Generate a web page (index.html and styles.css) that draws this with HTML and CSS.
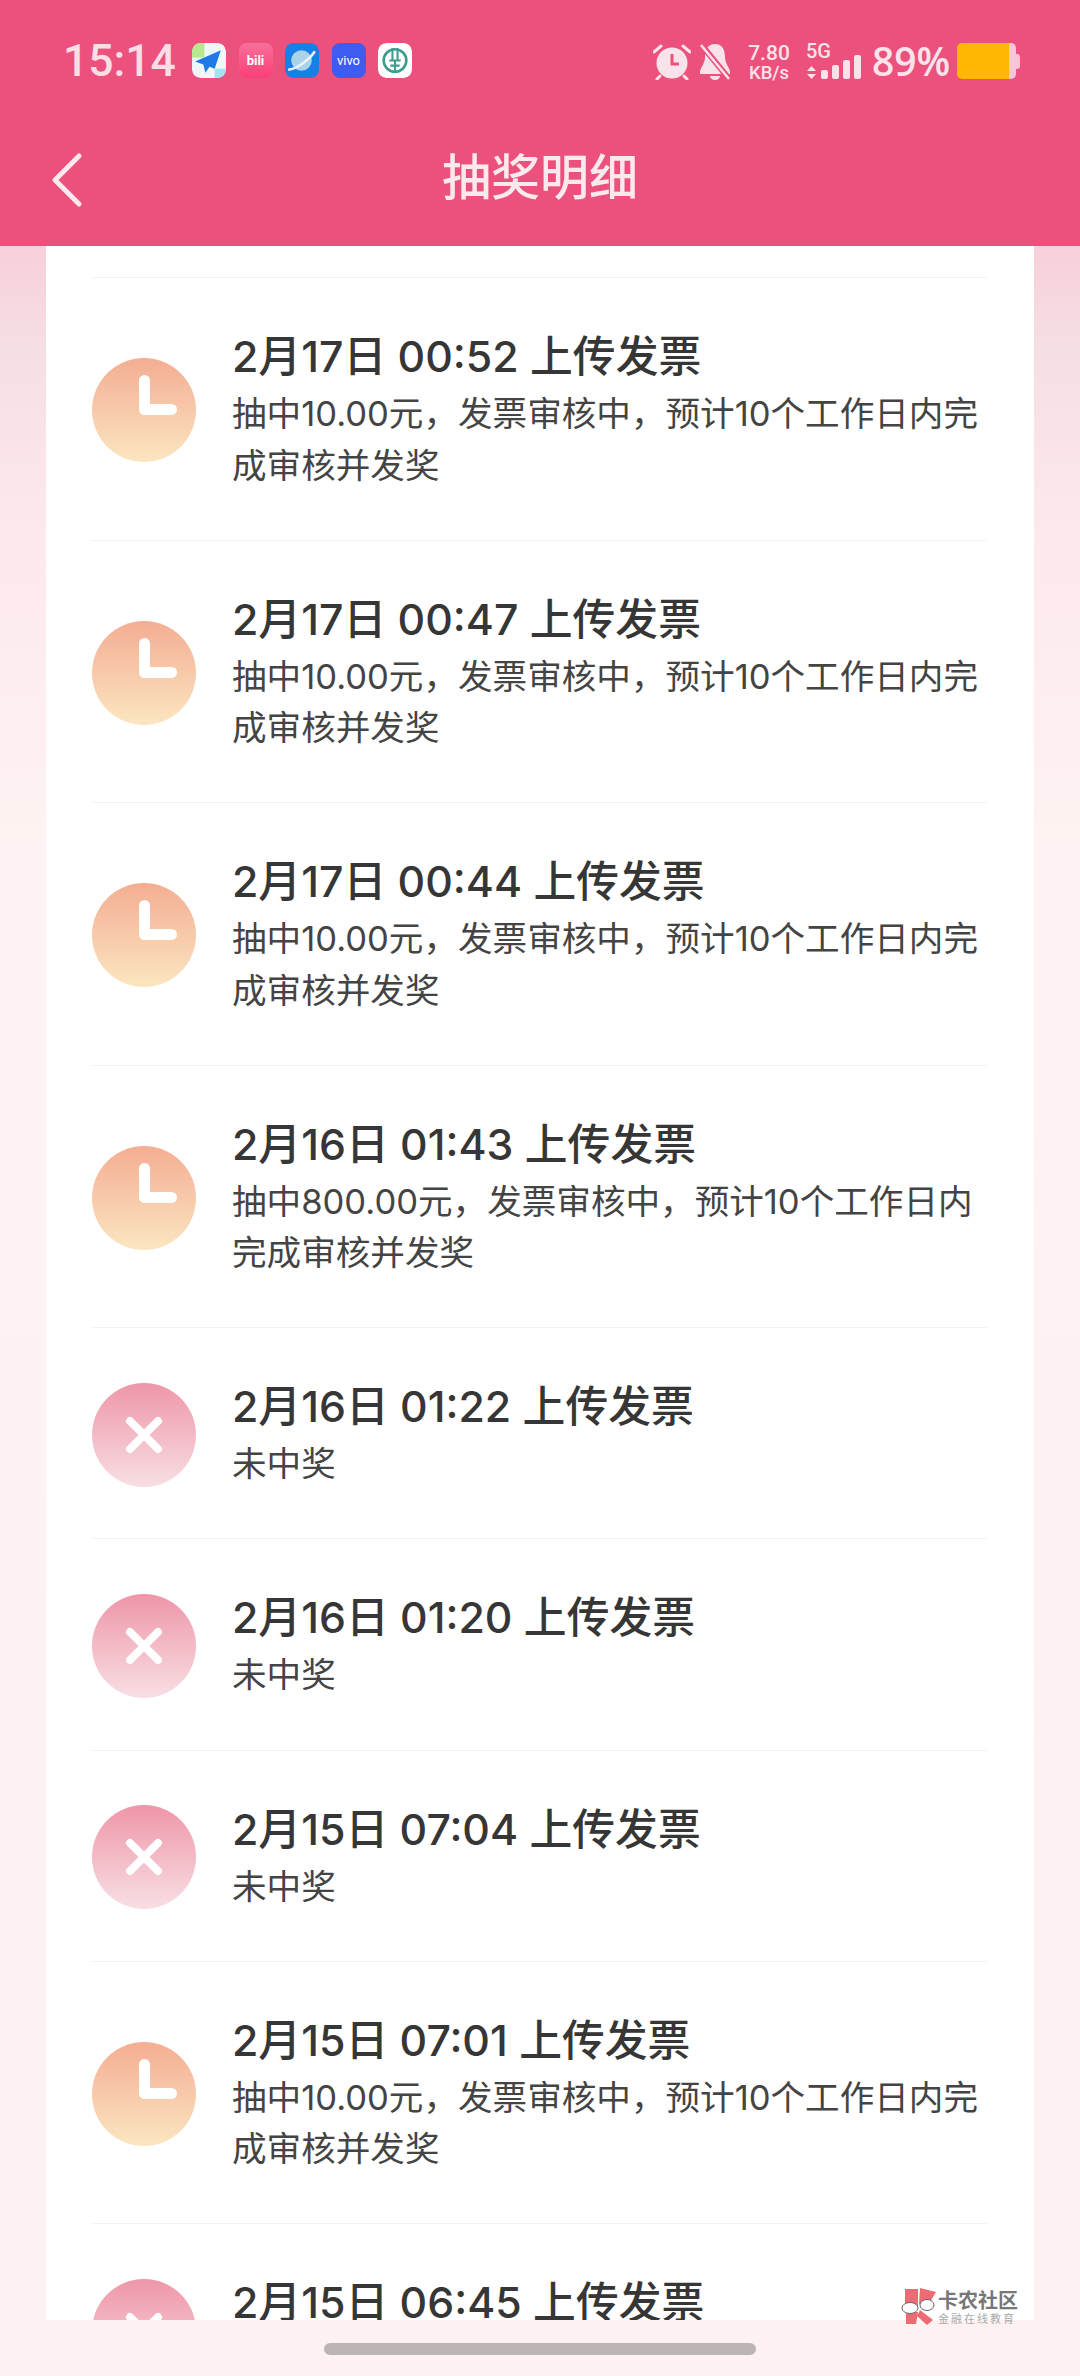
FILE: index.html
```html
<!DOCTYPE html>
<html lang="zh-CN">
<head>
    <meta charset="UTF-8">
    <meta name="viewport" content="width=device-width, initial-scale=1.0">
    <title>抽奖明细</title>
    <link rel="stylesheet" href="styles.css">
</head>
<body>
    <svg class="defs" width="0" height="0">
        <symbol id="clock" viewBox="0 0 104 104"><path d="M52.5 22.5V51.5H79.5" fill="none" stroke="#fff" stroke-width="11" stroke-linecap="round" stroke-linejoin="round"/></symbol>
        <symbol id="cross" viewBox="0 0 104 104"><path d="M38 38L66 66M66 38L38 66" fill="none" stroke="#fff" stroke-width="8" stroke-linecap="round"/></symbol>
    </svg>

    <div class="page">
        <header class="header">
            <div class="statusBar">
                <span class="time">15:14</span>
                <div class="apps">
                    <svg class="app" viewBox="0 0 33 34"><rect width="33" height="34" rx="8" fill="#eef6f6"/><path d="M0 8a8 8 0 0 1 8-8h4v14H0z" fill="#b5e88f"/><path d="M22 34v-9h11v1a8 8 0 0 1-8 8z" fill="#9fe3f5"/><path d="M28 7L3 18l8 3 2 8 4-6 5 2z" fill="#1f7ae8"/></svg>
                    <div class="app appBili">bili</div>
                    <svg class="app" viewBox="0 0 33 34"><rect width="33" height="34" rx="8" fill="#167fe8"/><circle cx="16" cy="17" r="10" fill="#a9d3e6"/><path d="M3 26C12 25 24 16 29 8" fill="none" stroke="#e8f4fb" stroke-width="2.5"/></svg>
                    <div class="app appVivo">vivo</div>
                    <svg class="app" viewBox="0 0 33 34"><rect width="33" height="34" rx="8" fill="#fff"/><circle cx="16.500" cy="17" r="11" fill="none" stroke="#3f9c8c" stroke-width="2.500"/><path d="M14 5v12M19 5v12M11 17h11M16.500 17v12M12 22h9" fill="none" stroke="#3f9c8c" stroke-width="2"/></svg>
                </div>
                <div class="indicators">
                    <svg class="alarm" viewBox="0 0 38 37"><circle cx="19" cy="20" r="15.500" fill="#f9e3ea"/><path d="M1 9L8 3M37 9L30 3M7 33L4 36M31 33L34 36" stroke="#f9e3ea" stroke-width="3" stroke-linecap="round"/><path d="M19 11V21H26" fill="none" stroke="#eb517c" stroke-width="3"/></svg>
                    <svg class="bell" viewBox="0 0 32 37"><path d="M16 1c8 0 10 7 10 13 0 7 5 11 5 15v2H1v-2c0-4 5-8 5-15C6 8 8 1 16 1z" fill="#f9e3ea"/><path d="M11 33h10a5 4 0 0 1-10 0z" fill="#f9e3ea"/><path d="M1 0L31 37" stroke="#eb517c" stroke-width="6"/><path d="M2 2L30 36" stroke="#f9e3ea" stroke-width="2.500"/></svg>
                    <div class="speed"><span>7.80</span><span class="unit">KB/s</span></div>
                    <div class="signal">
                        <span class="netType">5G</span>
                        <div class="signalRow">
                            <svg class="arrows" viewBox="0 0 11 13"><path d="M5.500 0L10 5H1zM5.500 13L1 8h9z" fill="#f9e3ea"/></svg>
                            <div class="bars">
                                <i class="bar b1"></i><i class="bar b2"></i><i class="bar b3"></i><i class="bar b4"></i>
                            </div>
                        </div>
                    </div>
                    <span class="percent">89%</span>
                    <div class="battery"><div class="batteryBody"></div><div class="batteryCap"></div></div>
                </div>
            </div>
            <div class="navBar">
                <svg class="back" viewBox="0 0 32 56"><path d="M28 4L4 28L28 52" fill="none" stroke="#fce9ee" stroke-width="5" stroke-linecap="round" stroke-linejoin="round"/></svg>
                <h1 class="navTitle">抽奖明细</h1>
            </div>
        </header>

        <main class="content">
            <div class="card">
                <div class="listTop"></div>

                <div class="row">
                    <div class="icon wait"><svg><use href="#clock"/></svg></div>
                    <div class="text"><h2>2月17日 00:52 上传发票</h2><p>抽中10.00元，发票审核中，预计10个工作日内完成审核并发奖</p></div>
                </div>
                <div class="row">
                    <div class="icon wait"><svg><use href="#clock"/></svg></div>
                    <div class="text"><h2>2月17日 00:47 上传发票</h2><p>抽中10.00元，发票审核中，预计10个工作日内完成审核并发奖</p></div>
                </div>
                <div class="row">
                    <div class="icon wait"><svg><use href="#clock"/></svg></div>
                    <div class="text"><h2>2月17日 00:44 上传发票</h2><p>抽中10.00元，发票审核中，预计10个工作日内完成审核并发奖</p></div>
                </div>
                <div class="row">
                    <div class="icon wait"><svg><use href="#clock"/></svg></div>
                    <div class="text"><h2>2月16日 01:43 上传发票</h2><p>抽中800.00元，发票审核中，预计10个工作日内完成审核并发奖</p></div>
                </div>
                <div class="row">
                    <div class="icon lost"><svg><use href="#cross"/></svg></div>
                    <div class="text"><h2>2月16日 01:22 上传发票</h2><p>未中奖</p></div>
                </div>
                <div class="row">
                    <div class="icon lost"><svg><use href="#cross"/></svg></div>
                    <div class="text"><h2>2月16日 01:20 上传发票</h2><p>未中奖</p></div>
                </div>
                <div class="row">
                    <div class="icon lost"><svg><use href="#cross"/></svg></div>
                    <div class="text"><h2>2月15日 07:04 上传发票</h2><p>未中奖</p></div>
                </div>
                <div class="row">
                    <div class="icon wait"><svg><use href="#clock"/></svg></div>
                    <div class="text"><h2>2月15日 07:01 上传发票</h2><p>抽中10.00元，发票审核中，预计10个工作日内完成审核并发奖</p></div>
                </div>
                <div class="row">
                    <div class="icon lost"><svg><use href="#cross"/></svg></div>
                    <div class="text"><h2>2月15日 06:45 上传发票</h2><p>未中奖</p></div>
                </div>
            </div>
        </main>

        <footer class="bottomBar"><div class="homeBar"></div></footer>

        <div class="watermark">
            <svg class="wmLogo" viewBox="0 0 37 37"><path d="M5 1h13v19H5zM20 0l16 4-9 15-8-3zM6 24h12l-2 12H6zM20 22l13 10-6 5-10-9z" fill="#ee6a74"/><ellipse cx="10" cy="20" rx="8" ry="5.500" fill="#fff" stroke="#666"/><ellipse cx="27" cy="17" rx="7" ry="5.500" fill="#fff" stroke="#666"/></svg>
            <div class="wmText"><span class="wmName">卡农社区</span><span class="wmSub">金融在线教育</span></div>
        </div>
    </div>
</body>
</html>
```

FILE: styles.css
```css
* {
    box-sizing: border-box;
}
body {
    margin: 0;
    padding: 0;
    font-family: Inter, "Noto Sans CJK SC", sans-serif;
    background: #fdf1f1;
}
.defs {
    display: none;
}
.page {
    position: relative;
    width: 1080px;
    height: 2376px;
    display: flex;
    flex-direction: column;
    overflow: hidden;
}

/* header */
.header {
    height: 246px;
    flex: none;
    background: #eb517c;
    color: #fce9ee;
}
.statusBar {
    height: 122px;
    padding: 43px 60px 0 63px;
    display: flex;
    align-items: flex-start;
}
.time {
    font-family: Roboto, sans-serif;
    font-size: 44.5px;
    font-weight: 500;
    line-height: 36px;
    width: 129px;
    color: #fbdde5;
}
.apps {
    display: flex;
    gap: 12.5px;
}
.app {
    width: 34px;
    height: 35px;
    border-radius: 8px;
    display: block;
}
.appBili {
    background: linear-gradient(#f8709a, #fb3f78);
    color: #fff;
    font: 700 13px/35px Roboto, sans-serif;
    text-align: center;
}
.appVivo {
    background: #3f5cf2;
    color: #fff;
    font: 400 13px/35px Roboto, sans-serif;
    text-align: center;
}
.indicators {
    margin-left: auto;
    display: flex;
    align-items: flex-start;
    color: #f9e3ea;
}
.alarm {
    width: 38px;
    height: 37px;
}
.bell {
    width: 32px;
    height: 37px;
    margin-left: 8px;
}
.speed {
    margin-left: 15px;
    width: 46px;
    display: flex;
    flex-direction: column;
    align-items: center;
    font-family: Roboto, sans-serif;
    font-weight: 500;
    font-size: 21px;
    line-height: 20px;
}
.speed .unit {
    font-size: 18.5px;
}
.signal {
    margin-left: 14px;
    width: 56px;
    font-family: Roboto, sans-serif;
    font-weight: 500;
}
.netType {
    display: block;
    font-size: 20px;
    line-height: 16px;
}
.signalRow {
    display: flex;
    align-items: flex-end;
    margin-top: -5px;
    height: 25px;
}
.arrows {
    width: 11px;
    height: 13px;
}
.bars {
    display: flex;
    align-items: flex-end;
    gap: 4px;
    margin-left: 4px;
}
.bar {
    display: block;
    width: 7px;
    background: #f9e3ea;
    border-radius: 2px;
}
.b1 { height: 9px; }
.b2 { height: 14px; }
.b3 { height: 19px; }
.b4 { height: 24px; }
.percent {
    margin-left: 10px;
    font-family: "Open Sans", sans-serif;
    font-size: 39px;
    font-weight: 600;
    line-height: 36px;
    width: 77px;
}
.battery {
    margin-left: 8px;
    display: flex;
    align-items: center;
    width: 63px;
    height: 36px;
}
.batteryBody {
    width: 59px;
    height: 36px;
    background: linear-gradient(to right, #ffb703 52px, #f6c6d3 52px);
    border-radius: 5px;
}
.batteryCap {
    width: 4px;
    height: 15px;
    background: #f6c6d3;
    border-radius: 0 3px 3px 0;
}
.navBar {
    position: relative;
    height: 124px;
    display: flex;
    align-items: center;
    justify-content: center;
}
.back {
    position: absolute;
    left: 51px;
    top: 30px;
    width: 32px;
    height: 56px;
}
.navTitle {
    margin: 0;
    font-size: 49px;
    font-weight: 500;
    line-height: 60px;
    margin-top: -12px;
}

/* list */
.content {
    flex: 1;
    min-height: 0;
    overflow: hidden;
    padding: 0 46px;
    background: linear-gradient(#f7cfda 0, #f6dfe4 100px, #fde9ee 300px, #fef3f2 600px, #fdf1f1 100%);
}
.card {
    background: #fff;
    padding: 0 47px 0 46px;
}
.listTop {
    height: 32px;
    border-bottom: 1px solid #f1f1f1;
}
.row {
    display: flex;
    align-items: center;
    padding: 48px 0 48.6px;
    border-bottom: 1px solid #f1f1f1;
}
.icon {
    width: 104px;
    height: 104px;
    flex: none;
    border-radius: 50%;
    margin: 3px 36px 0 0;
}
.icon svg {
    display: block;
    width: 104px;
    height: 104px;
}
.wait {
    background: linear-gradient(#f4ad93, #fbe6c0);
}
.lost {
    background: linear-gradient(#ee96a8, #f8dfe4);
}
.text h2 {
    width: fit-content;
    margin: 0;
    font-size: 42.8px;
    font-weight: 500;
    line-height: 62px;
    color: #363636;
}
.text p {
    margin: 0;
    font-size: 34.6px;
    line-height: 51.5px;
    color: #444;
}
.bottomBar {
    height: 56px;
    flex: none;
    padding-top: 23px;
    background: #fdf1f1;
}
.homeBar {
    width: 432px;
    height: 12px;
    margin: 0 auto;
    border-radius: 6px;
    background: #bdb5b5;
}

/* watermark over the bottom corner */
.watermark {
    position: absolute;
    left: 900px;
    top: 2288px;
    display: flex;
    gap: 1px;
}
.wmLogo {
    width: 37px;
    height: 37px;
}
.wmText {
    display: flex;
    flex-direction: column;
    color: #777;
    font-family: "Noto Sans CJK SC", sans-serif;
}
.wmName {
    font-size: 20px;
    font-weight: 700;
    line-height: 23px;
}
.wmSub {
    margin-top: 1px;
    font-size: 11px;
    line-height: 13px;
    letter-spacing: 2px;
    color: #aaa;
}
```
